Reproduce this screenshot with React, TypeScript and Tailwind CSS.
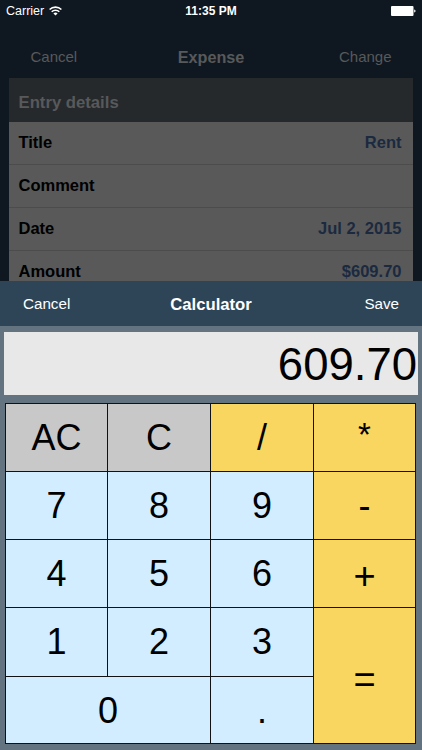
const details = [
  { label: 'Title', value: 'Rent' },
  { label: 'Comment', value: '' },
  { label: 'Date', value: 'Jul 2, 2015' },
  { label: 'Amount', value: '$609.70' }
];

const keys = [
  { label: 'AC', className: 'text-4xl bg-[#c8c8c8]' },
  { label: 'C', className: 'text-4xl bg-[#c8c8c8]' },
  { label: '/', className: 'text-4xl bg-[#f9d65f]' },
  { label: '*', className: 'pb-1.5 text-[33px] bg-[#f9d65f]' },
  { label: '7', className: 'text-4xl bg-[#d1edff]' },
  { label: '8', className: 'text-4xl bg-[#d1edff]' },
  { label: '9', className: 'text-4xl bg-[#d1edff]' },
  { label: '-', className: 'text-4xl bg-[#f9d65f]' },
  { label: '4', className: 'text-4xl bg-[#d1edff]' },
  { label: '5', className: 'text-4xl bg-[#d1edff]' },
  { label: '6', className: 'text-4xl bg-[#d1edff]' },
  { label: '+', className: 'pt-1.5 text-[38px] bg-[#f9d65f]' },
  { label: '1', className: 'text-4xl bg-[#d1edff]' },
  { label: '2', className: 'text-4xl bg-[#d1edff]' },
  { label: '3', className: 'text-4xl bg-[#d1edff]' },
  { label: '=', className: 'row-span-2 pt-2.5 text-[38px] bg-[#f9d65f]' },
  { label: '0', className: 'col-span-2 pt-0.5 text-4xl bg-[#d1edff]' },
  { label: '.', className: 'pt-0.5 text-4xl bg-[#d1edff]' }
];

function StatusBar() {
  return (
    <div className="grid grid-cols-3 items-center h-[22px] pl-1.5 pr-1.5 text-white text-[12.5px]">
      <div className="flex items-center gap-[5px]">
        <span>Carrier</span>
        <svg className="w-[13px] h-[10px]" viewBox="0 0 13 10" fill="none" stroke="currentColor" strokeWidth={1.6}>
          <path d="M0.6 3.5a8.4 8.4 0 0 1 11.8 0M2.7 5.8a5.4 5.4 0 0 1 7.6 0" />
          <path d="M6.5 9.6L4.4 7.5a3 3 0 0 1 4.2 0z" fill="currentColor" stroke="none" />
        </svg>
      </div>
      <span className="text-center text-xs font-semibold">11:35 PM</span>
      <svg className="justify-self-end w-[25px] h-[10px]" viewBox="0 0 25 10" fill="currentColor">
        <rect width="22.5" height="10" rx="1" />
        <path d="M23.2 3.4c1.8 0.3 1.8 2.9 0 3.2z" />
      </svg>
    </div>
  );
}

function ExpenseForm() {
  return (
    <div className="h-[281px] overflow-hidden bg-[#0f1820]">
      <StatusBar />
      <div className="grid grid-cols-3 items-center h-14 pt-3.5 px-[30.5px] text-[#58595b] text-[15px]">
        <span>Cancel</span>
        <span className="text-center text-[16.2px] font-bold">Expense</span>
        <span className="text-right">Change</span>
      </div>
      <div className="mx-[9px] bg-[#595959]">
        <h2 className="flex items-center h-11 pt-1.5 pl-[9.5px] bg-[#25292c] text-[#58595b] text-[16.7px] font-bold">Entry details</h2>
        {details.map((row) => (
          <div key={row.label} className="flex items-center justify-between h-[43px] pb-px pl-[9.5px] pr-[11.5px] border-b border-[#4c4c4c] text-[16.5px] font-bold">
            <span className="text-black">{row.label}</span>
            <span className="text-[#1b2a40]">{row.value}</span>
          </div>
        ))}
      </div>
    </div>
  );
}

function Calculator() {
  return (
    <div className="h-[469px] bg-[#63737f]">
      <div className="grid grid-cols-3 items-center h-[45px] pt-0.5 px-[23px] bg-[#2d4557] text-white text-[15.2px]">
        <span>Cancel</span>
        <span className="text-center text-[16.7px] font-bold">Calculator</span>
        <span className="text-right">Save</span>
      </div>
      <div className="flex items-center justify-end mt-1.5 mx-1 h-[63px] pt-1 pr-px bg-[#e8e8e8] text-[45.5px]">609.70</div>
      <div className="grid grid-cols-[101px_102px_102px_101px] grid-rows-[67px_67px_67px_68px_66px] gap-px mt-2 ml-[5px] w-[411px] p-px bg-[#101214]">
        {keys.map((key) => (
          <button key={key.label} className={`flex items-center justify-center ${key.className}`}>
            {key.label}
          </button>
        ))}
      </div>
    </div>
  );
}

export default function App() {
  return (
    <div className="w-[422px] h-[750px] overflow-hidden text-black font-['Liberation_Sans',Arial,sans-serif]">
      <ExpenseForm />
      <Calculator />
    </div>
  );
}
